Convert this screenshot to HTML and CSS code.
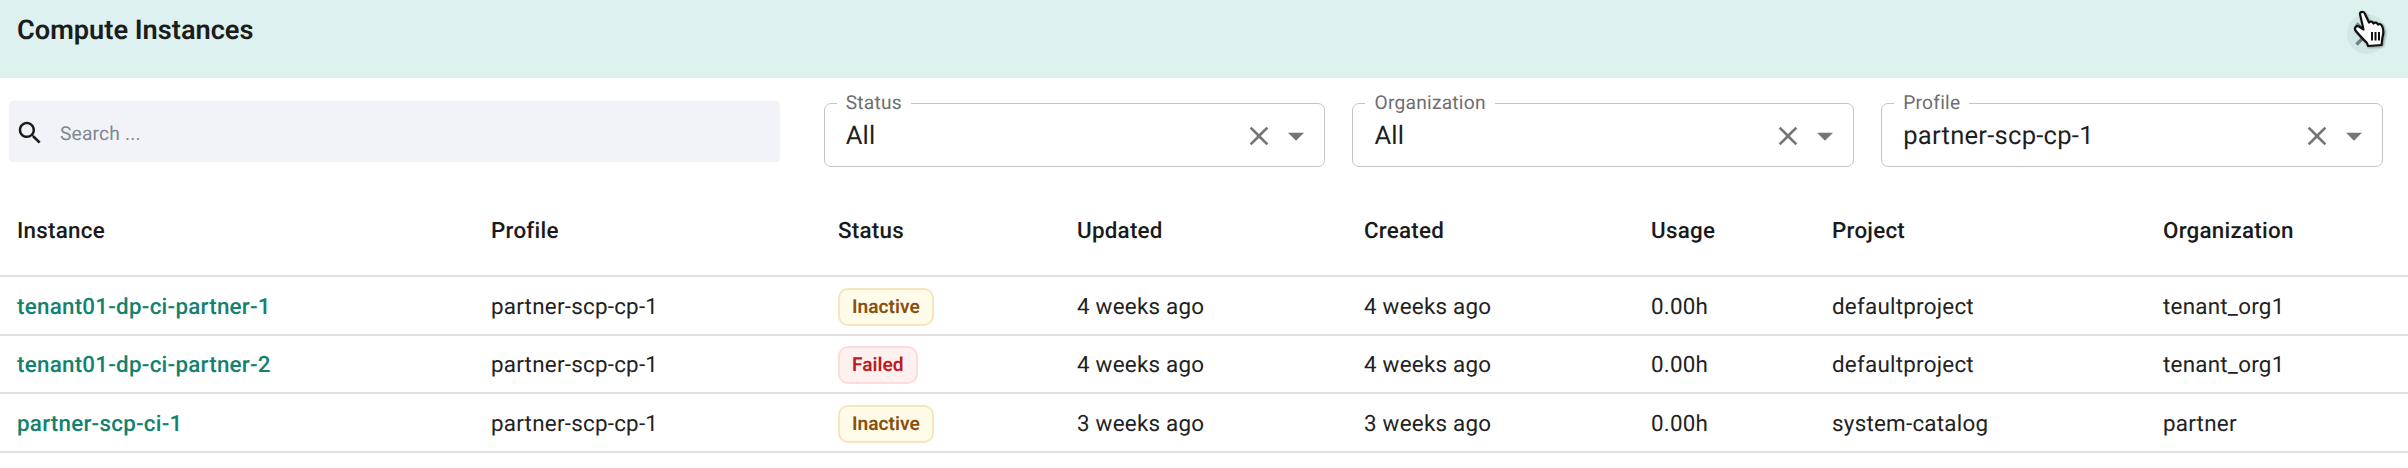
FILE: index.html
```html
<!DOCTYPE html>
<html lang="en">
<head>
<meta charset="utf-8">
<title>Compute Instances</title>
<link rel="stylesheet" href="styles.css">
</head>
<body>
<header class="head">
  <h1 class="title">Compute Instances</h1>
  <button class="close" aria-label="Close">
    <svg class="close-x" viewBox="0 0 24 24" width="40" height="40"><path d="M19 6.41 17.59 5 12 10.59 6.41 5 5 6.41 10.59 12 5 17.59 6.41 19 12 13.41 17.59 19 19 17.59 13.41 12z"/></svg>
    <svg class="hand" viewBox="0 0 48 48" width="48" height="48">
      <path d="M15 6C15 3.500 19 3 20 6l4 8.500c1.500-1.500 3.500-1 4.500 1 1.500-1.500 3.500-1 4.500 1 1.500-1 3.500-.5 4.500 2.500 1 3 1 7 0 10l-1 8L23 38l-1-3c-3-3-8-8-11.500-12.500C9 20 11 17 14 18.500l4.500 3z" fill="#fff" stroke="#111" stroke-width="2.200" stroke-linejoin="round"/>
      <path d="M27 24v8.500M30.500 24v8.500M34 24v8.500" fill="none" stroke="#111" stroke-width="2"/>
    </svg>
  </button>
</header>
<section class="filters">
  <div class="search">
    <svg class="search-icon" viewBox="0 0 24 24" width="30" height="30"><path d="M15.500 14h-.79l-.28-.27C15.410 12.590 16 11.110 16 9.500 16 5.910 13.090 3 9.500 3S3 5.910 3 9.500 5.910 16 9.500 16c1.610 0 3.090-.59 4.230-1.570l.27.28v.79l5 4.990L20.490 19l-4.990-5zm-6 0C7.010 14 5 11.990 5 9.500S7.010 5 9.500 5 14 7.010 14 9.500 11.990 14 9.500 14z"/></svg>
    <span class="placeholder">Search ...</span>
  </div>
  <div class="select">
    <span class="legend">Status</span>
    <span class="value">All</span>
    <svg class="clear" viewBox="0 0 24 24" width="32" height="32"><path d="M19 6.410 17.590 5 12 10.590 6.410 5 5 6.410 10.590 12 5 17.590 6.410 19 12 13.410 17.590 19 19 17.590 13.410 12z"/></svg>
    <svg class="caret" viewBox="0 0 24 24" width="38" height="38"><path d="m7 10 5 5 5-5z"/></svg>
  </div>
  <div class="select">
    <span class="legend">Organization</span>
    <span class="value">All</span>
    <svg class="clear" viewBox="0 0 24 24" width="32" height="32"><path d="M19 6.410 17.590 5 12 10.590 6.410 5 5 6.410 10.590 12 5 17.590 6.410 19 12 13.410 17.590 19 19 17.590 13.410 12z"/></svg>
    <svg class="caret" viewBox="0 0 24 24" width="38" height="38"><path d="m7 10 5 5 5-5z"/></svg>
  </div>
  <div class="select">
    <span class="legend">Profile</span>
    <span class="value">partner-scp-cp-1</span>
    <svg class="clear" viewBox="0 0 24 24" width="32" height="32"><path d="M19 6.410 17.590 5 12 10.590 6.410 5 5 6.410 10.590 12 5 17.590 6.410 19 12 13.410 17.590 19 19 17.590 13.410 12z"/></svg>
    <svg class="caret" viewBox="0 0 24 24" width="38" height="38"><path d="m7 10 5 5 5-5z"/></svg>
  </div>
</section>
<table class="grid">
  <colgroup>
    <col class="c1"><col class="c2"><col class="c3"><col class="c4"><col class="c5"><col class="c6"><col class="c7"><col class="c8">
  </colgroup>
  <thead>
    <tr><th>Instance</th><th>Profile</th><th>Status</th><th>Updated</th><th>Created</th><th>Usage</th><th>Project</th><th>Organization</th></tr>
  </thead>
  <tbody>
    <tr><td><a class="link">tenant01-dp-ci-partner-1</a></td><td>partner-scp-cp-1</td><td><span class="badge warn">Inactive</span></td><td>4 weeks ago</td><td>4 weeks ago</td><td>0.00h</td><td>defaultproject</td><td>tenant_org1</td></tr>
    <tr><td><a class="link">tenant01-dp-ci-partner-2</a></td><td>partner-scp-cp-1</td><td><span class="badge fail">Failed</span></td><td>4 weeks ago</td><td>4 weeks ago</td><td>0.00h</td><td>defaultproject</td><td>tenant_org1</td></tr>
    <tr><td><a class="link">partner-scp-ci-1</a></td><td>partner-scp-cp-1</td><td><span class="badge warn">Inactive</span></td><td>3 weeks ago</td><td>3 weeks ago</td><td>0.00h</td><td>system-catalog</td><td>partner</td></tr>
  </tbody>
</table>
</body>
</html>
```
FILE: styles.css
```css
* { box-sizing: border-box; }
html, body { margin: 0; background: #fff; }
body { font-family: Roboto, "Liberation Sans", sans-serif; color: #1f1f1f; height: 468px; overflow: hidden; text-rendering: geometricPrecision; }

.head { height: 78px; background: #ddf2f0; display: flex; justify-content: space-between; padding: 14px 21px 0 17px; }
.title { margin: 0; font-size: 27.2px; line-height: 32px; font-weight: 600; color: #1c1c1c; }
.close { position: relative; width: 40px; height: 40px; padding: 0; border: 0; border-radius: 50%; background: #d2e7e5; }
.close-x { display: block; fill: #6f8180; }
.hand { position: absolute; left: -2px; top: -6px; filter: drop-shadow(1px 1px 1px rgba(0,0,0,.35)); }

.filters { display: flex; align-items: flex-start; padding: 25px 25px 0 10px; height: 124px; }
.search { width: 769px; height: 59px; margin-top: -1px; margin-right: 45px; display: flex; align-items: center; padding: 3px 0 0 5px; gap: 15px; background: #f2f3f9; border-radius: 3px; box-shadow: 0 0 2px rgba(0,0,0,.18); }
.search-icon { fill: #1c1c1c; flex: none; }
.placeholder { font-size: 19.2px; letter-spacing: .18px; color: #808790; }
.select { position: relative; width: 502px; height: 64px; margin-right: 27px; display: flex; align-items: center; padding: 2px 9px 0 21px; border: 1.5px solid #c4c4c4; border-radius: 7px; }
.select:last-child { margin-right: 0; }
.legend { position: absolute; left: 12px; top: -11px; padding: 0 9px; background: #fff; font-size: 19.2px; line-height: 20px; letter-spacing: .24px; color: #6e6e6e; }
.value { flex: 1; font-size: 25.6px; letter-spacing: .24px; color: #1f1f1f; }
.clear { fill: #757575; margin-right: 2px; }
.caret { fill: #757575; }

.grid { width: 2408px; border-collapse: collapse; table-layout: fixed; }
.c1 { width: 474px; } .c2 { width: 347px; } .c3 { width: 239px; } .c4 { width: 287px; }
.c5 { width: 287px; } .c6 { width: 181px; } .c7 { width: 331px; } .c8 { width: 262px; }
.grid th { height: 74px; padding: 0 0 16px 17px; text-align: left; font-size: 22.4px; line-height: 28px; font-weight: 500; letter-spacing: .24px; color: #1a1a1a; border-bottom: 2px solid #e0e0e0; }
.grid td { height: 58.67px; padding: 3px 0 0 17px; font-size: 22.4px; letter-spacing: .24px; color: #222; border-bottom: 2px solid #e0e0e0; }
.link { font-weight: 500; color: #12826f; }
.badge { display: inline-block; height: 38px; padding: 0 12px; border-radius: 10px; font-size: 19.2px; font-weight: 600; letter-spacing: 0; line-height: 34px; vertical-align: 2px; border: 2px solid; }
.warn { background: #fffbe9; border-color: #f6e6bd; color: #875010; }
.fail { background: #fff0f0; border-color: #fcdcdc; color: #bd1a22; }
```
